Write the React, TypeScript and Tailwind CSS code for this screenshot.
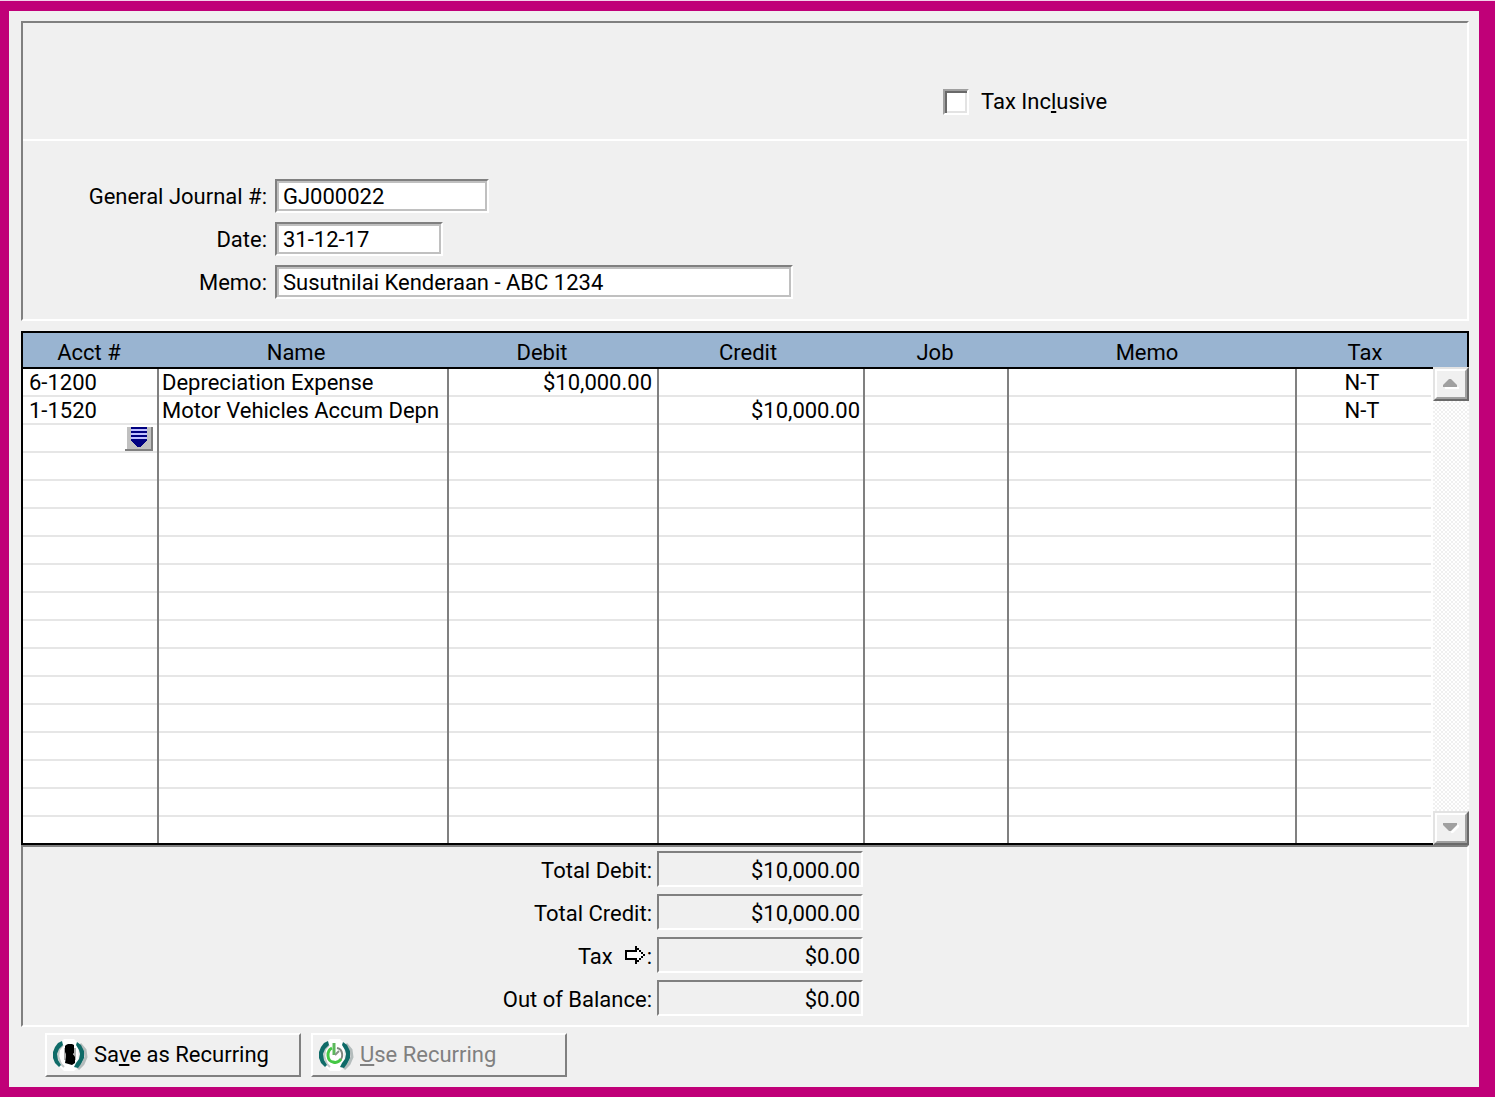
import React from 'react';

interface JournalLine {
    acct?: string;
    name?: string;
    debit?: string;
    credit?: string;
    job?: string;
    memo?: string;
    tax?: string;
}

const ROW_COUNT = 17;

const journalLines: JournalLine[] = [
    { acct: '6-1200', name: 'Depreciation Expense', debit: '$10,000.00', tax: 'N-T' },
    { acct: '1-1520', name: 'Motor Vehicles Accum Depn', credit: '$10,000.00', tax: 'N-T' },
];

const columns = [
    { key: 'acct', label: 'Acct #', col: 'w-[136px]', head: 'pr-1', cell: 'pl-[6px]' },
    { key: 'name', label: 'Name', col: 'w-[290px]', head: 'pr-4', cell: 'pl-[3px]' },
    { key: 'debit', label: 'Debit', col: 'w-[210px]', head: 'pr-6', cell: 'justify-end pr-[5px]' },
    { key: 'credit', label: 'Credit', col: 'w-[206px]', head: 'pr-7', cell: 'justify-end pr-[3px]' },
    { key: 'job', label: 'Job', col: 'w-[144px]', head: 'pr-1', cell: 'pl-[3px]' },
    { key: 'memo', label: 'Memo', col: '', head: 'pr-3', cell: 'pl-[3px]' },
    { key: 'tax', label: 'Tax', col: 'w-[136px]', head: '', cell: 'justify-center pr-1' },
] as const;

const fields = [
    { id: 'journal', label: 'General Journal #:', value: 'GJ000022', width: 'w-[214px]' },
    { id: 'date', label: 'Date:', value: '31-12-17', width: 'w-[168px]' },
    { id: 'memo', label: 'Memo:', value: 'Susutnilai Kenderaan - ABC 1234', width: 'w-[518px]' },
];

const TaxArrow = () => (
    <svg width="20" height="18" viewBox="0 0 20 18" shapeRendering="crispEdges" className="mr-[2px] mb-1 ml-3">
        <path d="M0 4H10V0H12V2H14V4H16V6H18V8H20V10H18V12H16V14H14V16H12V18H10V14H0Z" fill="#000" />
        <path d="M2 6H12V4H14V6H16V8H18V10H16V12H14V14H12V12H2Z" fill="#fff" />
    </svg>
);

// teal brackets shared by both recurring buttons
const RecurringBrackets = () => (
    <>
        <path d="M12 0H22L26 4V28L22 32H12L8 28V4Z" fill="#fff" />
        <path d="M11 6L7 11L6 17L9 25L12 28" fill="none" stroke="#c4caca" strokeWidth="2" />
        <path d="M28 5L33 11L34 18L31 25L26 30" fill="none" stroke="#b4bcbc" strokeWidth="3" />
        <path d="M10 2L6 4L3 8L1 13V19L3 24L7 28L9 26L6 21L5 15L7 10L11 6Z" fill="#0f6b68" />
        <path d="M25 3L29 6L32 12V19L29 25L26 29L22 28L24 24L27 20L28 15L27 11L24 6Z" fill="#0f6b68" />
    </>
);

const SaveIcon = () => (
    <svg width="36" height="32" viewBox="0 0 36 32">
        <RecurringBrackets />
        <path d="M12 9H14V21H12ZM22 9H24V21H22Z" fill="#b0b0b0" />
        <path d="M14 6L16 5H20L22 6V14L21 15L23 18V24L20 26L13 24L14 18V15L13 13V7Z" fill="#000" />
    </svg>
);

const UseIcon = () => (
    <svg width="36" height="32" viewBox="0 0 36 32">
        <RecurringBrackets />
        <path d="M19 9C25 10 26 19 21 22" fill="none" stroke="#7d857d" strokeWidth="2" />
        <path d="M14 9C8 12 9 22 15 23C18 24 21 23 23 20" fill="none" stroke="#45c845" strokeWidth="3" />
        <path d="M16 4V16" stroke="#5cb85c" strokeWidth="3" />
        <path d="M17 16L21 12" stroke="#8a928a" strokeWidth="2" />
    </svg>
);

const PickAccountButton = () => (
    <button type="button" aria-label="Select account" className="mt-[2px] mr-1 ml-auto self-start">
        <svg width="28" height="24" viewBox="0 0 28 24" shapeRendering="crispEdges" className="block">
            <path d="M2 0H28V24H0V22H2Z" fill="#808080" />
            <path d="M2 0H26V22H2Z" fill="#c0c0c0" />
            <path d="M6 0H22V12H6Z" fill="#c0c0ff" />
            <path d="M6 0H22V2H6ZM6 4H22V6H6ZM6 8H22V10H6ZM6 12H22V14L15 20H13L6 14Z" fill="#000080" />
        </svg>
    </button>
);

const ScrollButton = ({ direction }: { direction: 'up' | 'down' }) => (
    <button
        type="button"
        aria-label={`Scroll ${direction}`}
        className="h-[34px] w-full shrink-0 border-2 border-t-[#e3e3e3] border-r-[#696969] border-b-[#696969] border-l-[#e3e3e3] bg-[#f0f0f0]"
    >
        <span className="flex h-full w-full items-center justify-center border-2 border-t-white border-r-[#a0a0a0] border-b-[#a0a0a0] border-l-white">
            <svg width="18" height="10" viewBox="0 0 18 10">
                {direction === 'up' ? (
                    <>
                        <path d="M3 8H17V10H3Z" fill="#fff" />
                        <path d="M7 0H9L15 6V8H1V6Z" fill="#a0a0a0" />
                    </>
                ) : (
                    <>
                        <path d="M15 2H17V4L11 10H9V8Z" fill="#fff" />
                        <path d="M1 0H15V2L9 8H7L1 2Z" fill="#a0a0a0" />
                    </>
                )}
            </svg>
        </span>
    </button>
);

const JournalTable = () => (
    <div className="mt-[10px] flex">
        <table className="min-w-0 flex-1 table-fixed border-separate border-spacing-0 border-y-2 border-l-2 border-black bg-white">
            <colgroup>
                {columns.map((c) => (
                    <col key={c.key} className={c.col} />
                ))}
            </colgroup>
            <thead>
                <tr>
                    {columns.map((c) => (
                        <th key={c.key} className={`h-9 border-b-2 border-black bg-[#99b4d1] p-0 pt-[6px] font-normal ${c.head}`}>
                            {c.label}
                        </th>
                    ))}
                </tr>
            </thead>
            <tbody>
                {Array.from({ length: ROW_COUNT }, (_, row) => {
                    const line = journalLines[row] ?? {};
                    const last = row === ROW_COUNT - 1;
                    const picker = row === journalLines.length;
                    return (
                        <tr key={row}>
                            {columns.map((c) => (
                                <td key={c.key} className={`p-0 ${c.key === 'tax' ? 'pr-[2px]' : 'border-r-2 border-[#808080]'}`}>
                                    <div className={`flex items-center whitespace-nowrap ${last ? 'h-[26px]' : 'h-7 border-b-2 border-[#e6e6e6]'} ${picker ? '' : `pt-[2px] ${c.cell}`}`}>
                                        {line[c.key]}
                                        {picker && c.key === 'acct' && <PickAccountButton />}
                                    </div>
                                </td>
                            ))}
                        </tr>
                    );
                })}
            </tbody>
        </table>
        <div className="flex w-9 shrink-0 flex-col">
            <div className="h-9 border-t-2 border-r-2 border-black bg-[#99b4d1]" />
            <ScrollButton direction="up" />
            <div className="flex-1 bg-[repeating-conic-gradient(#f0f0f0_0_25%,#ffffff_0_50%)] bg-[length:4px_4px]" />
            <ScrollButton direction="down" />
        </div>
    </div>
);

const TotalRow = ({ id, label, value }: { id: string; label: React.ReactNode; value: string }) => (
    <div className="flex h-9 items-center">
        <label htmlFor={id} className="flex w-[629px] items-center justify-end pt-1">
            {label}
        </label>
        <output
            id={id}
            className="ml-[5px] flex h-full w-[206px] items-center justify-end border-2 border-t-[#808080] border-r-white border-b-white border-l-[#808080] pt-1 pr-px"
        >
            {value}
        </output>
    </div>
);

export default function App() {
    return (
        <div className="min-h-screen bg-[#f3d3ea] pt-px font-['Roboto','Liberation_Sans',sans-serif] text-[22px] leading-6 text-black">
            <div className="border-t-[10px] border-r-[16px] border-b-[10px] border-l-[9px] border-[#c00078] bg-[#f0f0f0] pt-[10px] pr-[10px] pb-[10px] pl-3">
                <section className="border-2 border-t-[#808080] border-r-white border-b-white border-l-[#808080]">
                    <div className="flex border-b-2 border-white pt-[66px] pb-6 pl-[920px]">
                        <label className="flex items-center gap-3">
                            <input
                                type="checkbox"
                                className="h-[26px] w-[26px] appearance-none border-2 border-t-[#a0a0a0] border-r-white border-b-white border-l-[#a0a0a0] bg-white shadow-[inset_2px_2px_0_#696969,inset_-2px_-2px_0_#e3e3e3]"
                            />
                            <span>
                                Tax Inc<span className="underline underline-offset-2">l</span>usive
                            </span>
                        </label>
                    </div>
                    <div className="flex flex-col gap-[9px] pt-[38px] pb-5">
                        {fields.map((field) => (
                            <div key={field.id} className="flex items-center gap-2">
                                <label htmlFor={field.id} className="w-[244px] pt-[2px] text-right">
                                    {field.label}
                                </label>
                                <input
                                    id={field.id}
                                    type="text"
                                    defaultValue={field.value}
                                    className={`h-[34px] border-2 border-t-[#808080] border-r-white border-b-white border-l-[#808080] bg-white pl-[6px] shadow-[inset_0_0_0_2px_#c0c0c0] outline-none ${field.width}`}
                                />
                            </div>
                        ))}
                    </div>
                </section>

                <JournalTable />

                <section className="flex flex-col gap-[7px] border-2 border-t-[#808080] border-r-white border-b-white border-l-[#808080] pt-1 pb-[9px]">
                    <TotalRow id="total-debit" label="Total Debit:" value="$10,000.00" />
                    <TotalRow id="total-credit" label="Total Credit:" value="$10,000.00" />
                    <TotalRow id="total-tax" label={<>Tax <TaxArrow />:</>} value="$0.00" />
                    <TotalRow id="out-of-balance" label="Out of Balance:" value="$0.00" />
                </section>

                <div className="mt-[6px] ml-6 flex gap-[10px]">
                    <button
                        type="button"
                        className="flex h-11 w-[256px] items-center gap-[6px] border-2 border-t-white border-r-[#808080] border-b-[#808080] border-l-white pl-[5px]"
                    >
                        <SaveIcon />
                        <span>
                            Sa<span className="underline underline-offset-2">v</span>e as Recurring
                        </span>
                    </button>
                    <button
                        type="button"
                        disabled
                        className="flex h-11 w-[256px] items-center gap-[6px] border-2 border-t-white border-r-[#808080] border-b-[#808080] border-l-white pl-[5px] text-[#808080]"
                    >
                        <UseIcon />
                        <span>
                            <span className="underline underline-offset-2">U</span>se Recurring
                        </span>
                    </button>
                </div>
            </div>
        </div>
    );
}
